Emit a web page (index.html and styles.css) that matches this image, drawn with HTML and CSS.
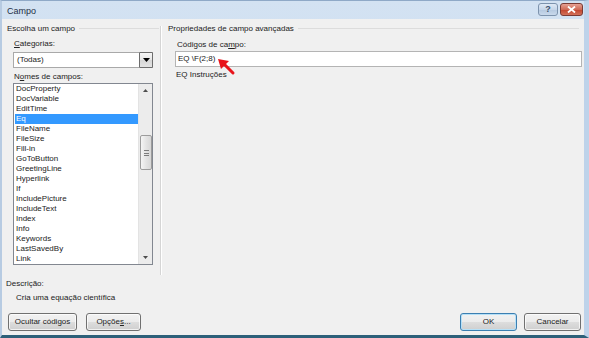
FILE: index.html
```html
<!DOCTYPE html>
<html>
<head>
<meta charset="utf-8">
<link rel="stylesheet" href="styles.css">
</head>
<body>
<div class="window">
  <div class="titlebar">
    <span class="title">Campo</span>
    <span class="cap help">?</span>
    <span class="cap close">
      <svg width="9" height="7" viewBox="0 0 9 7"><path d="M1 0.5 L8 6.5 M8 0.5 L1 6.5" stroke="#fff" stroke-width="1.8"/></svg>
    </span>
  </div>
  <div class="client">
    <div class="main">
      <div class="col-left">
        <div class="group-head"><span>Escolha um campo</span></div>
        <div class="inner">
          <div class="label lbl-cat"><u>C</u>ategorias:</div>
          <div class="combo">
            <span class="combo-text">(Todas)</span>
            <span class="combo-btn"><svg width="7" height="4" viewBox="0 0 7 4"><path d="M0 0 H7 L3.5 4 Z" fill="#000"/></svg></span>
          </div>
          <div class="label lbl-names">N<u>o</u>mes de campos:</div>
          <div class="listbox">
            <ul class="items">
              <li>DocProperty</li>
              <li>DocVariable</li>
              <li>EditTime</li>
              <li class="sel">Eq</li>
              <li>FileName</li>
              <li>FileSize</li>
              <li>Fill-in</li>
              <li>GoToButton</li>
              <li>GreetingLine</li>
              <li>Hyperlink</li>
              <li>If</li>
              <li>IncludePicture</li>
              <li>IncludeText</li>
              <li>Index</li>
              <li>Info</li>
              <li>Keywords</li>
              <li>LastSavedBy</li>
              <li>Link</li>
            </ul>
            <div class="scrollbar">
              <div class="sb-arrow"><svg width="5" height="3" viewBox="0 0 5 3"><path d="M0 3 H5 L2.5 0 Z" fill="#4d4d4d"/></svg></div>
              <div class="sb-track">
                <div class="sb-thumb"><span class="grip"></span></div>
              </div>
              <div class="sb-arrow"><svg width="5" height="3" viewBox="0 0 5 3"><path d="M0 0 H5 L2.5 3 Z" fill="#4d4d4d"/></svg></div>
            </div>
          </div>
        </div>
      </div>
      <div class="vsep"></div>
      <div class="col-right">
        <div class="group-head"><span>Propriedades de campo avançadas</span></div>
        <div class="inner-r">
          <div class="label lbl-codes">Códigos de ca<u>m</u>po:</div>
          <div class="field-wrap">
            <div class="field">EQ \F(2;8)</div>
            <svg class="pointer" width="20" height="20" viewBox="0 0 20 20">
              <path d="M7 7 L16 16" stroke="#e8141b" stroke-width="3" stroke-linecap="round"/>
              <path d="M1 2 L12 4 L4 12 Z" fill="#e8141b"/>
            </svg>
          </div>
          <div class="label lbl-instr">EQ Instruções</div>
        </div>
      </div>
    </div>
    <div class="desc">
      <div class="label">Descrição:</div>
      <div class="label desc-text">Cria uma equação científica</div>
    </div>
    <div class="buttons">
      <span class="btn btn-hide">Ocultar códigos</span>
      <span class="btn btn-opt">Opçõe<u>s</u>...</span>
      <span class="spacer"></span>
      <span class="btn btn-ok default">OK</span>
      <span class="btn btn-cancel">Cancelar</span>
    </div>
  </div>
</div>
</body>
</html>
```

FILE: styles.css
```css
* { box-sizing: border-box; }
html, body { margin: 0; padding: 0; }
body {
  width: 589px;
  height: 338px;
  overflow: hidden;
  font-family: "Liberation Sans", Arial, sans-serif;
  font-size: 8px;
  color: #222;
  background: #c4d7ec;
}
u { text-decoration: underline; text-underline-offset: 1px; }

.window {
  width: 589px;
  height: 338px;
  display: flex;
  flex-direction: column;
  border-left: 2px solid #b7cbe2;
  border-right: 5px solid #bed3ea;
  border-bottom: 3px solid #2d6079;
  border-top: 1px solid #8fa9c7;
  background: linear-gradient(to bottom, #d3e2f2, #c3d6ec);
}

.titlebar {
  height: 18px;
  display: flex;
  align-items: flex-start;
  padding: 2px 0 0 5px;
  flex-shrink: 0;
}
.title {
  font-size: 9px;
  line-height: 14px;
  color: #1e2f45;
  margin-top: 1px;
}
.cap {
  height: 13px;
  border: 1px solid #7d93ad;
  border-radius: 3px;
  display: flex;
  align-items: center;
  justify-content: center;
}
.help {
  margin-left: auto;
  width: 20px;
  background: linear-gradient(to bottom, #dfe9f5, #c6d6e9 50%, #b4c8df 51%, #c9d9ec);
  color: #3b4f6a;
  font-weight: bold;
  font-size: 9px;
  line-height: 11px;
}
.close {
  width: 23px;
  margin-left: 2px;
  margin-right: 1px;
  border-color: #7a3a34;
  background: linear-gradient(to bottom, #e6a194, #d06a56 50%, #c2432c 51%, #d2715a);
}

.client {
  flex: 1;
  background: #f0f0f0;
  display: flex;
  flex-direction: column;
}

.main {
  display: flex;
  height: 256px;
}
.col-left { width: 158px; }
.col-right { flex: 1; }

.label {
  height: 11px;
  line-height: 11px;
  white-space: nowrap;
}

.group-head {
  display: flex;
  align-items: center;
  height: 11px;
  line-height: 11px;
  margin-top: 4px;
  white-space: nowrap;
}
.group-head::after {
  content: "";
  flex: 1;
  height: 1px;
  background: #dcdcdc;
  margin-left: 4px;
}
.col-left .group-head { padding-left: 5px; padding-right: 1px; }
.col-right .group-head { padding-left: 6px; padding-right: 5px; }

.inner { padding: 0 7px 0 11px; }
.lbl-cat { margin-top: 4px; padding-left: 1px; }
.combo {
  margin-top: 3px;
  height: 16px;
  background: #fff;
  border: 1px solid #a9a9a9;
  display: flex;
  align-items: center;
}
.combo-text { flex: 1; padding-left: 3px; line-height: 14px; }
.combo-btn {
  width: 14px;
  height: 16px;
  margin: -1px -1px -1px 0;
  border: 1px solid #6d6d6d;
  border-radius: 1px;
  background: linear-gradient(to bottom, #f6f6f6, #e6e6e6 50%, #d6d6d6 51%, #e3e3e3);
  display: flex;
  align-items: center;
  justify-content: center;
}
.lbl-names { margin-top: 3px; padding-left: 1px; }

.listbox {
  margin-top: 1px;
  height: 182px;
  background: #fff;
  border: 1px solid #828790;
  display: flex;
  overflow: hidden;
}
.items {
  list-style: none;
  margin: 0;
  padding: 0 0 0 1px;
  flex: 1;
}
.items li {
  height: 10px;
  line-height: 10px;
  padding-left: 1px;
}
.items li.sel { background: #3399ff; color: #fff; }

.scrollbar {
  width: 14px;
  display: flex;
  flex-direction: column;
  background: #ececec;
  border-left: 1px solid #e3e3e3;
}
.sb-arrow {
  height: 13px;
  display: flex;
  align-items: center;
  justify-content: center;
}
.sb-track { flex: 1; padding-top: 38px; }
.sb-thumb {
  height: 35px;
  margin: 0 0 0 1px;
  border: 1px solid #9c9c9c;
  border-radius: 2px;
  background: linear-gradient(to right, #f5f5f5, #e4e4e4 50%, #d7d7d7);
  display: flex;
  align-items: center;
  justify-content: center;
}
.grip {
  width: 5px;
  height: 6px;
  border-top: 1px solid #7c7c7c;
  border-bottom: 1px solid #7c7c7c;
  background: linear-gradient(to bottom, transparent 2px, #7c7c7c 2px, #7c7c7c 3px, transparent 3px);
}

.vsep {
  width: 2px;
  margin-top: 7px;
  height: 249px;
  border-left: 1px solid #d5d5d5;
  border-right: 1px solid #ffffff;
}

.inner-r { padding: 0 2px 0 13px; }
.lbl-codes { margin-top: 5px; padding-left: 2px; }
.field-wrap { position: relative; margin-top: 1px; }
.field {
  height: 16px;
  background: #fff;
  border: 1px solid #b4b4b4;
  line-height: 14px;
  padding-left: 2px;
}
.pointer {
  position: absolute;
  left: 42px;
  top: 6px;
}
.lbl-instr { margin-top: 2px; padding-left: 1px; }

.desc { padding-left: 4px; }
.desc .label:first-child { margin-top: 3px; }
.desc-text { margin-top: 3px; padding-left: 10px; }

.buttons {
  display: flex;
  padding: 0 3px 0 6px;
  margin-top: 10px;
}
.spacer { flex: 1; }
.btn {
  height: 18px;
  line-height: 16px;
  border: 1px solid #707070;
  border-radius: 3px;
  background: linear-gradient(to bottom, #f2f2f2, #ebebeb 50%, #dddddd 51%, #cfcfcf);
  text-align: center;
  color: #222;
  box-shadow: inset 0 0 0 1px rgba(255,255,255,0.7);
}
.btn-hide { width: 69px; }
.btn-opt { width: 55px; margin-left: 9px; }
.btn-ok { width: 57px; }
.btn-ok.default { border-color: #3c7fb1; box-shadow: inset 0 0 0 1px #b6e0f7; }
.btn-cancel { width: 57px; margin-left: 7px; }
```
